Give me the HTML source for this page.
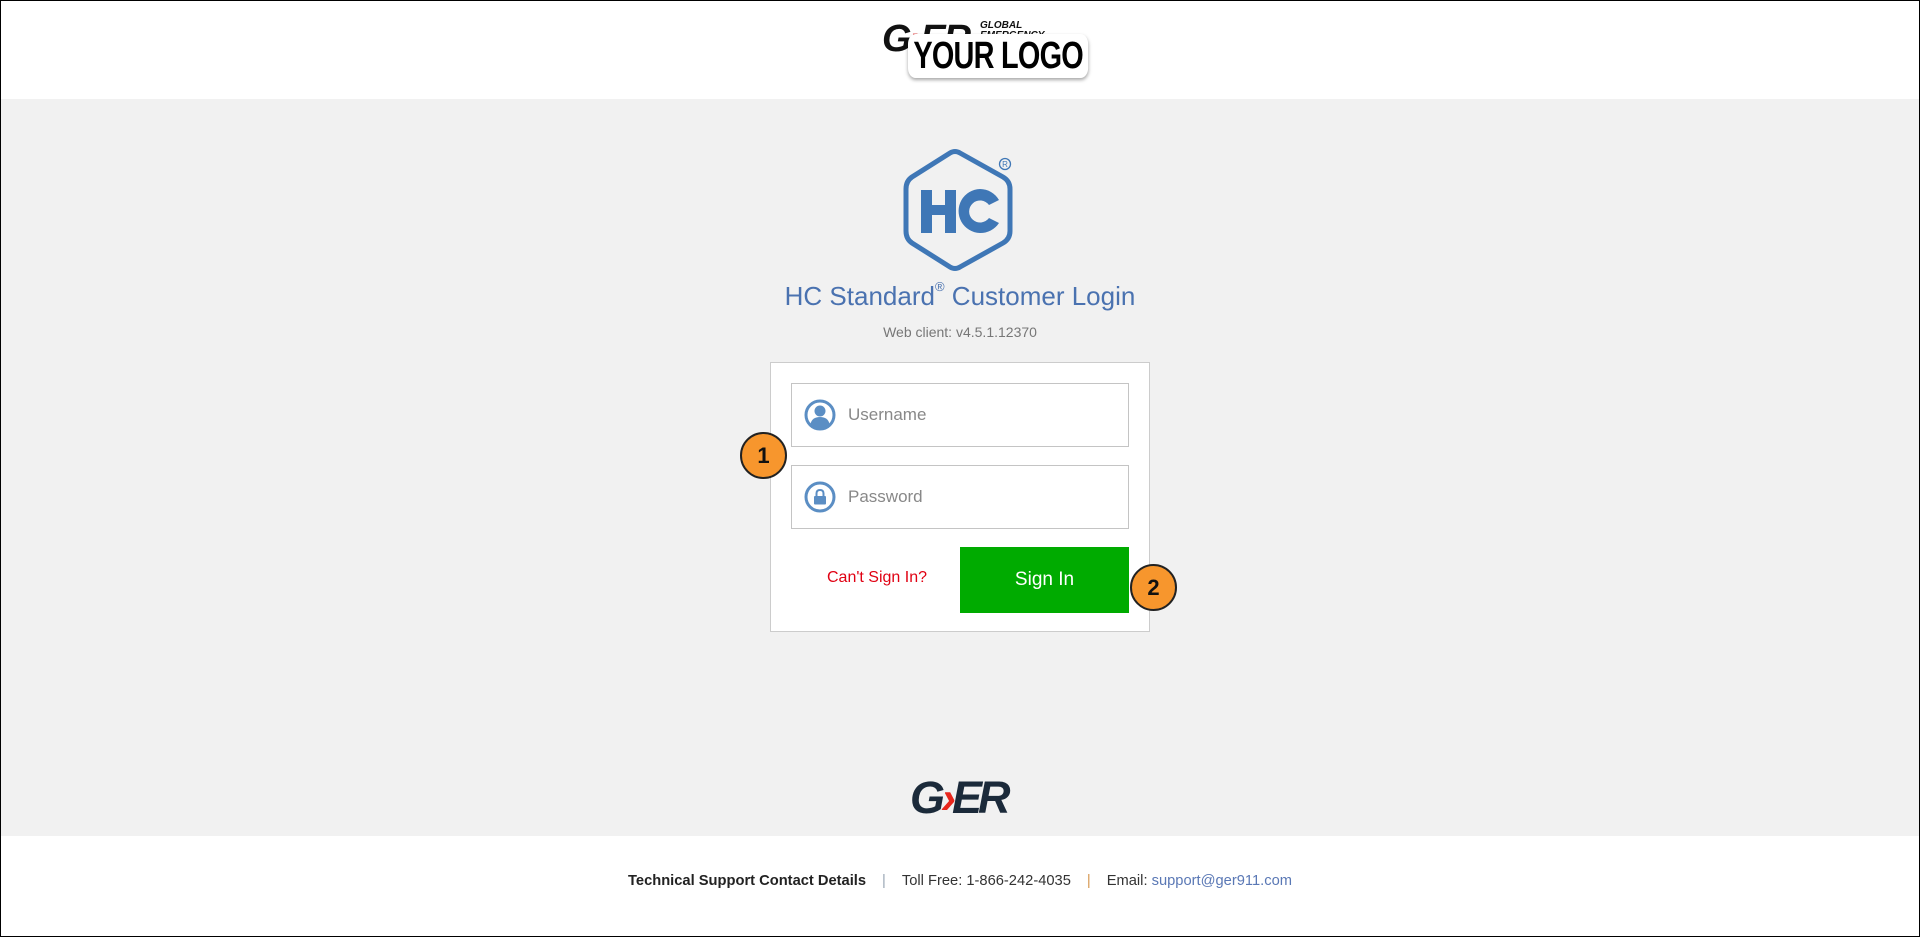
<!DOCTYPE html>
<html><head><meta charset="utf-8"><style>
*{margin:0;padding:0;box-sizing:border-box}
html,body{width:1920px;height:937px;overflow:hidden;font-family:"Liberation Sans",sans-serif}
body{position:relative;background:#fff}
.frame{position:absolute;inset:0;border:1px solid #000;pointer-events:none;z-index:10}
.gray{position:absolute;left:0;top:99px;width:1920px;height:737px;background:#f1f1f1}
.abs{position:absolute}
.title{left:0;width:1920px;top:281px;text-align:center;font-size:26px;color:#4a72b0}
.title sup{font-size:13px;vertical-align:top;position:relative;top:-2px}
.ver{left:0;width:1920px;top:324px;text-align:center;font-size:14px;color:#777}
.box{left:770px;top:362px;width:380px;height:270px;background:#fff;border:1px solid #ccc}
.inp{left:791px;width:338px;height:64px;background:#fff;border:1px solid #c4c4c4}
.ph{position:absolute;left:56px;top:21px;font-size:17px;color:#888}
.icon{position:absolute;left:12px;top:15px;width:32px;height:32px}
.btn{left:960px;top:547px;width:169px;height:66px;background:#00ab00;color:#fff;font-size:19px;text-align:center;line-height:66px}
.cant{left:827px;top:569px;font-size:16px;color:#e00012}
.badge{width:47px;height:47px;border-radius:50%;background:#f7962d;border:2px solid #222;font-weight:bold;font-size:22px;text-align:center;line-height:43px;color:#111}
.foot{left:0;width:1920px;top:873px;text-align:center;font-size:14.7px;color:#333;white-space:nowrap}
.foot b{color:#222}
.foot .sep{color:#9aa7b5;margin:0 16px}
.foot a{color:#5a78b5;text-decoration:none}
</style></head><body>
<div class="frame"></div>
<div class="abs" style="left:882px;top:18px;width:210px;height:64px;white-space:nowrap">
  <div class="abs" style="left:0;top:0;font:italic bold 38px 'Liberation Sans',sans-serif;color:#111;letter-spacing:-2px">G<span style="color:#d22">›</span>ER</div>
  <div class="abs" style="left:98px;top:3px;font:italic bold 10px 'Liberation Sans',sans-serif;color:#111;line-height:10px">GLOBAL<br>EMERGENCY</div>
  <div class="abs" style="left:26px;top:16px;background:#fff;border-radius:10px;box-shadow:0 2px 4px rgba(0,0,0,.35);padding:1px 7px;font:bold 38px 'Liberation Sans',sans-serif;color:#000;letter-spacing:-1px;line-height:42px;white-space:nowrap;transform:scaleX(.76);transform-origin:left">YOUR LOGO</div>
</div>
<div class="gray"></div>
<svg class="abs" style="left:900px;top:145px" width="125" height="130" viewBox="0 0 125 130">
  <path d="M60 8 L103 32 Q110 36 110 44 L110 86 Q110 94 103 98 L60 122 Q55 125 50 122 L12 98 Q6 94 6 86 L6 44 Q6 36 12 32 L50 8 Q55 5 60 8 Z" fill="none" stroke="#3f77b6" stroke-width="5"/>
  <path d="M21 45 H32 V60 H45 V45 H56 V88 H45 V70 H32 V88 H21 Z" fill="#3f77b6"/>
  <path d="M80 44 A22 22 0 1 0 99 78 L89 73 A11 11 0 1 1 89 60 L99 55 A22 22 0 0 0 80 44 Z" fill="#3f77b6"/>
  <circle cx="105" cy="19" r="5.5" fill="none" stroke="#3f77b6" stroke-width="1.3"/>
  <text x="105" y="22" font-size="8" text-anchor="middle" fill="#3f77b6" font-family="Liberation Sans">R</text>
</svg>
<div class="abs title">HC Standard<sup>®</sup> Customer Login</div>
<div class="abs ver">Web client: v4.5.1.12370</div>
<div class="abs box"></div>
<div class="abs inp" style="top:383px">
  <svg class="icon" viewBox="0 0 32 32"><circle cx="16" cy="16" r="14" fill="#fff" stroke="#5b8ec4" stroke-width="3"/><circle cx="16" cy="12" r="5.5" fill="#5b8ec4"/><path d="M6.5 25 Q8 18 16 18 Q24 18 25.5 25 Q21 29 16 29 Q11 29 6.5 25Z" fill="#5b8ec4"/></svg>
  <div class="ph">Username</div>
</div>
<div class="abs inp" style="top:465px">
  <svg class="icon" viewBox="0 0 32 32"><circle cx="16" cy="16" r="14" fill="#fff" stroke="#5b8ec4" stroke-width="3"/><path d="M12.5 15 V12.5 Q12.5 9 16 9 Q19.5 9 19.5 12.5 V15" fill="none" stroke="#5b8ec4" stroke-width="2"/><rect x="10" y="15" width="12" height="8.5" rx="1" fill="#5b8ec4"/></svg>
  <div class="ph">Password</div>
</div>
<div class="abs cant">Can't Sign In?</div>
<div class="abs btn">Sign In</div>
<div class="abs badge" style="left:740px;top:432px">1</div>
<div class="abs badge" style="left:1130px;top:564px">2</div>
<div class="abs" style="left:910px;top:772px;font:italic bold 45px 'Liberation Sans',sans-serif;color:#1b2a3a;letter-spacing:-4px">G<span style="color:#e8261c">›</span>ER</div>
<div class="abs foot"><b>Technical Support Contact Details</b><span class="sep">|</span>Toll Free: 1-866-242-4035<span class="sep" style="color:#d79a55">|</span>Email: <a>support@ger911.com</a></div>
</body></html>
